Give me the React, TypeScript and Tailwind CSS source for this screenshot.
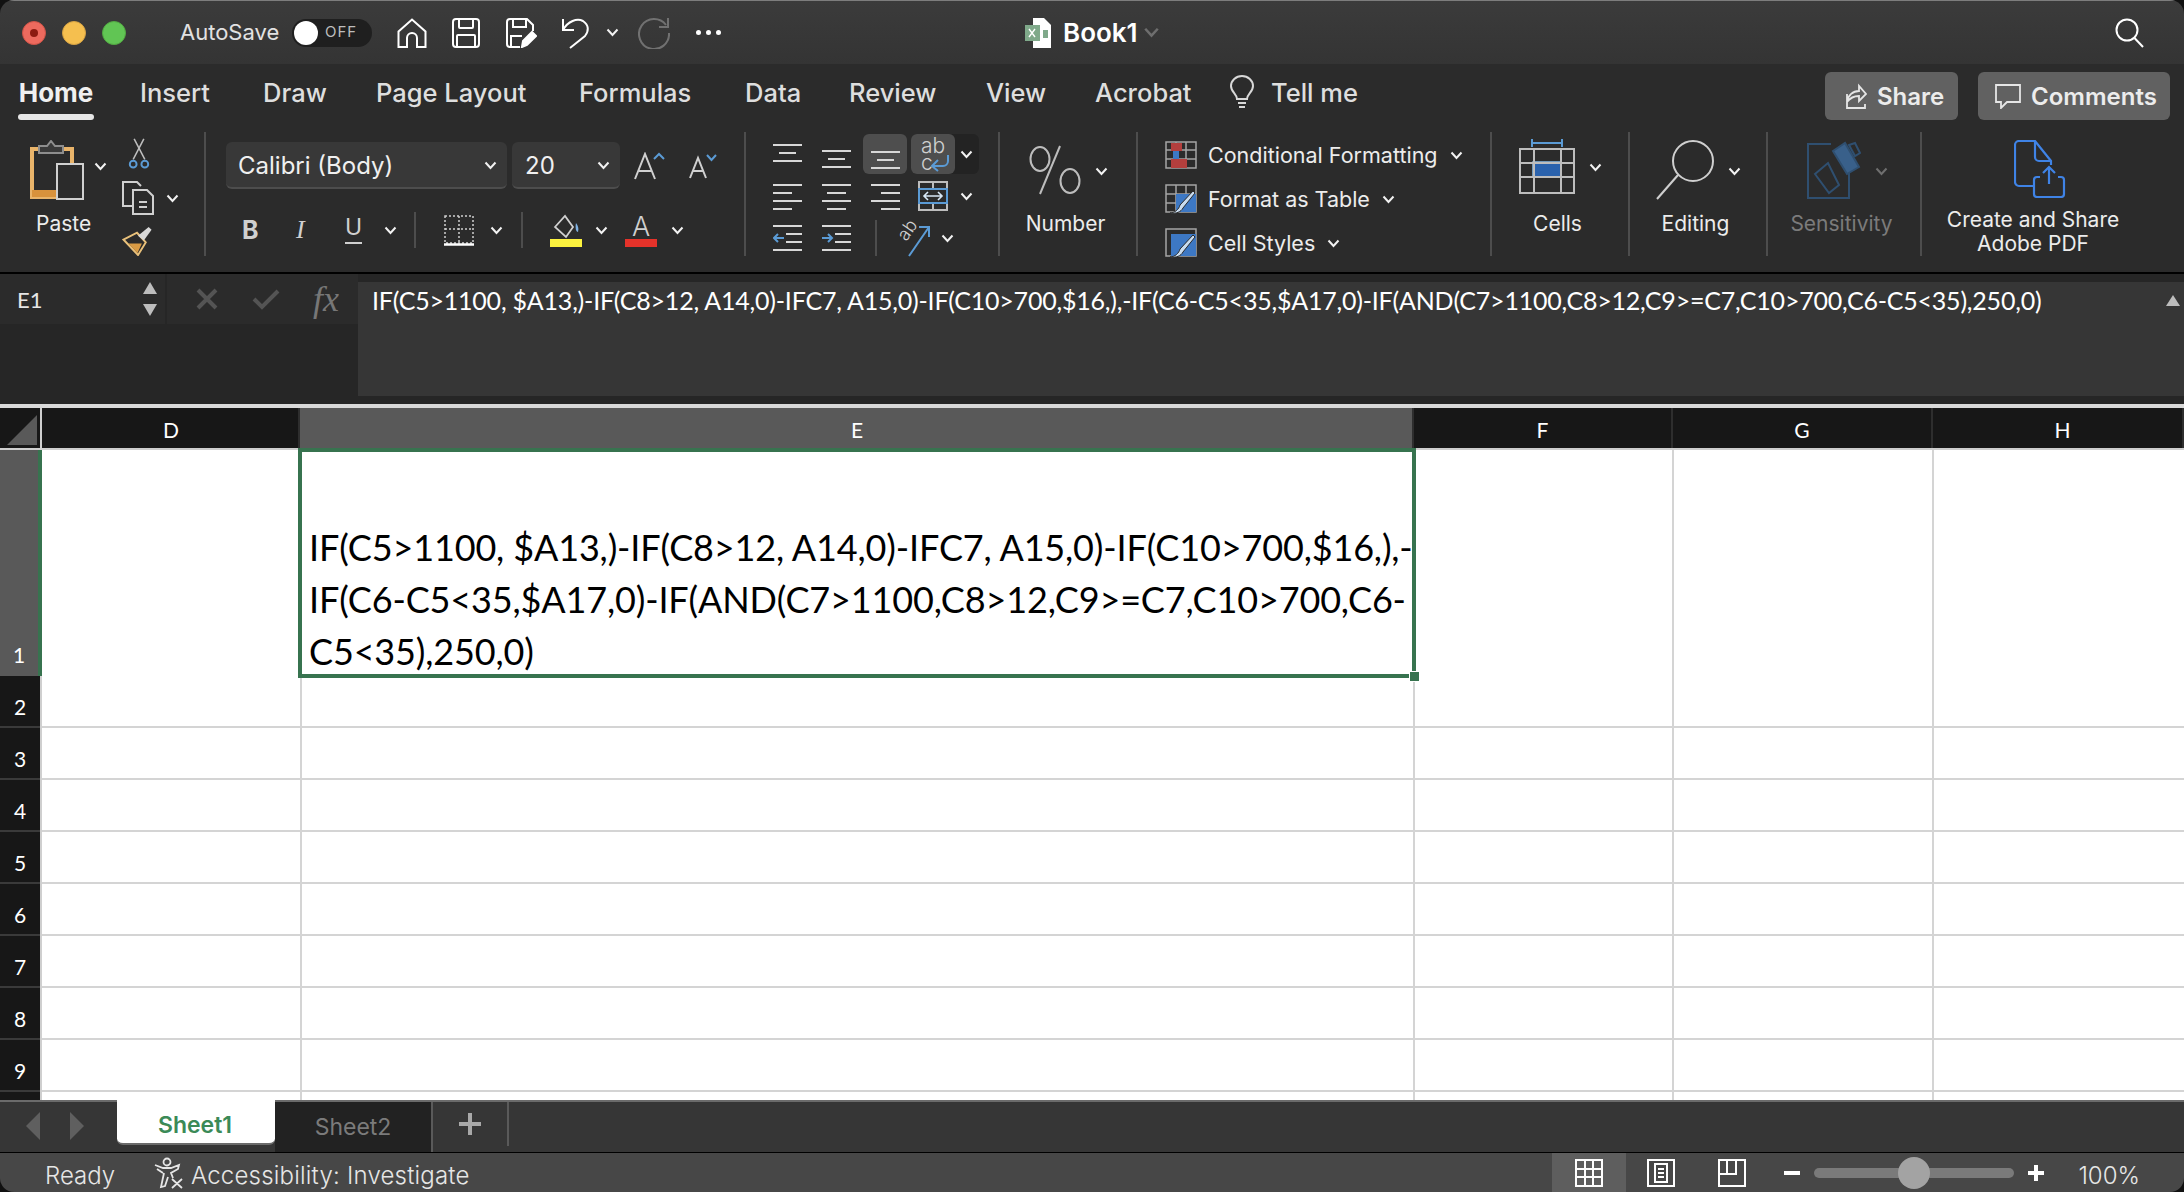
import type { ReactNode } from "react";

const SANS = "font-['Inter','Liberation_Sans',sans-serif]";
const CELL = "font-['Lato','Noto_Sans',sans-serif]";

const COLS = [
  { name: "D", w: "w-[258px] pl-[2px]" },
  { name: "E", w: "w-[1114px] pl-[2px]" },
  { name: "F", w: "w-[259px]" },
  { name: "G", w: "w-[260px]" },
  { name: "H", w: "flex-1 pl-[10px]" },
];
const ROWS = [2, 3, 4, 5, 6, 7, 8, 9];
const TABS = [
  { name: "Insert", w: "w-[74px] ml-[46px]" },
  { name: "Draw", w: "w-[63px] ml-[49px]" },
  { name: "Page Layout", w: "w-[152px] ml-[50px]" },
  { name: "Formulas", w: "w-[115px] ml-[51px]" },
  { name: "Data", w: "w-[57px] ml-[51px]" },
  { name: "Review", w: "w-[88px] ml-[47px]" },
  { name: "View", w: "w-[60px] ml-[49px]" },
  { name: "Acrobat", w: "w-[97px] ml-[49px]" },
];

function Chev({ className = "", color = "#f2f2f2" }: { className?: string; color?: string }) {
  return (
    <svg width="13" height="9" viewBox="0 0 13 9" className={`shrink-0 ${className}`}>
      <path d="M1.5 1.5 6.5 7l5-5.500" fill="none" stroke={color} strokeWidth="2" />
    </svg>
  );
}

function Lines({ rows, w = 29, color = "#d8d8d8" }: { rows: [number, number, number][]; w?: number; color?: string }) {
  return (
    <svg width={w} height="28" viewBox={`0 0 ${w} 28`} className="shrink-0">
      {rows.map(([x1, x2, y], i) => (
        <path key={i} d={`M${x1} ${y}H${x2}`} stroke={color} strokeWidth="2" />
      ))}
    </svg>
  );
}

function Sep({ className = "" }: { className?: string }) {
  return <div className={`w-[2px] bg-[#4d4d4d] shrink-0 ${className}`} />;
}

function BigTool({ label, icon, chev, wClass, dim, iconClass = "" }: { label: ReactNode; icon: ReactNode; chev?: boolean; wClass: string; dim?: boolean; iconClass?: string }) {
  return (
    <div className={`flex flex-col items-center h-full border-r-2 border-[#4d4d4d] shrink-0 ${wClass}`}>
      <div className={`h-[76px] flex items-center justify-center gap-[14px] ${iconClass}`}>
        {icon}
        {chev && <Chev color={dim ? "#6f6f6f" : "#f2f2f2"} className="mt-[2px]" />}
      </div>
      <div className={`text-[21px] leading-[28px] text-center pr-[5px] pt-[2px] ${dim ? "text-[#7b7b7b]" : "text-[#ececec]"}`}>{label}</div>
    </div>
  );
}

function StyleRow({ icon, label }: { icon: ReactNode; label: string }) {
  return (
    <div className="flex items-center h-[32px]">
      {icon}
      <span className="ml-[11px] text-[21.5px] text-[#ececec] whitespace-nowrap">{label}</span>
      <Chev className="ml-[12px]" />
    </div>
  );
}

function TitleBar() {
  return (
    <div className="h-16 shrink-0 flex items-center pl-[22px] border-t border-[#7d7d7d] bg-gradient-to-b from-[#3b3b3b] to-[#343434] text-white">
      <div className="w-6 h-6 rounded-full bg-[#ed6a5e] border border-[#ce5347] flex items-center justify-center">
        <div className="w-2 h-2 rounded-full bg-[#8c1a10]" />
      </div>
      <div className="w-6 h-6 rounded-full bg-[#f5bf4f] border border-[#d6a243] ml-4" />
      <div className="w-6 h-6 rounded-full bg-[#61c554] border border-[#52a842] ml-4" />
      <span className="ml-[54px] text-[22px] text-[#e2e2e2] w-[100px] whitespace-nowrap">AutoSave</span>
      <div className="ml-3 w-[80px] h-7 rounded-full bg-[#1f1f1f] flex items-center">
        <div className="w-6 h-6 ml-[2px] rounded-full bg-white" />
        <span className="ml-[7px] text-[15px] tracking-[1px] text-[#bdbdbd]">OFF</span>
      </div>
      <svg width="30" height="30" viewBox="0 0 30 30" className="ml-[25px]" fill="none" stroke="#fff" strokeWidth="2">
        <path d="M1.500 13.500 15 1.500l13.500 12V29H20V20a5 5 0 0 0-10 0v9H1.500Z" />
      </svg>
      <svg width="28" height="30" viewBox="0 0 28 30" className="ml-[25px]" fill="none" stroke="#fff" strokeWidth="2">
        <rect x="1" y="1" width="26" height="28" rx="3" />
        <path d="M7 1v8a1 1 0 0 0 1 1h12a1 1 0 0 0 1-1V1M5 29V18a1 1 0 0 1 1-1h16a1 1 0 0 1 1 1v11" />
      </svg>
      <svg width="31" height="30" viewBox="0 0 31 30" className="ml-[26px]" fill="none" stroke="#fff" strokeWidth="2">
        <path d="M14 29H4a3 3 0 0 1-3-3V4a3 3 0 0 1 3-3h17l6 6v6M7 1v8h13V1M5 29V18h11" />
        <path d="M16 29l1-6 9-9 4 4-9 9-5 2Z" fill="#fff" />
      </svg>
      <svg width="29" height="32" viewBox="0 0 29 32" className="ml-[24px]" fill="none" stroke="#fff" strokeWidth="2">
        <path d="M2 2v11h11M2 13C7 4 16 1 22 4c6 4 6 10 2 15L9 31" />
      </svg>
      <Chev className="ml-[16px]" />
      <svg width="32" height="32" viewBox="0 0 32 32" className="ml-[19px]" fill="none" stroke="#717171" strokeWidth="2">
        <path d="M28 8A15 15 0 1 0 31 16M30 1v9H21" />
      </svg>
      <div className="ml-[26px] flex gap-[5px]">
        <div className="w-[5px] h-[5px] rounded-full bg-white" />
        <div className="w-[5px] h-[5px] rounded-full bg-white" />
        <div className="w-[5px] h-[5px] rounded-full bg-white" />
      </div>
      <svg width="27" height="30" viewBox="0 0 27 30" className="ml-[304px]">
        <path d="M8 0h11l7 7v23H8Z" fill="#fff" />
        <rect x="0" y="7" width="15" height="16" fill="#7fa98a" />
        <path d="M4 11l6 8M10 11l-6 8" stroke="#fff" strokeWidth="1.400" />
        <path d="M18 12h5v8h-5Z" fill="#7fa98a" />
      </svg>
      <span className="ml-[11px] text-[26px] font-semibold text-white leading-none">Book1</span>
      <Chev className="ml-[7px] scale-125" color="#6e6e6e" />
      <svg width="30" height="30" viewBox="0 0 30 30" className="ml-auto mr-[39px]" fill="none" stroke="#fff" strokeWidth="2">
        <circle cx="12" cy="12" r="10.500" />
        <path d="M19.500 20 28 29" />
      </svg>
    </div>
  );
}

function TabRow() {
  return (
    <div className="h-[68px] flex text-[25.5px] text-[#dedede] shrink-0">
      <div className="ml-[18px] w-[76px] flex flex-col items-center">
        <span className="mt-[13px] h-[32px] leading-[32px] font-bold text-[#f0f0f0] text-[26px] whitespace-nowrap">Home</span>
        <div className="mt-[5px] h-[6px] w-full rounded-full bg-[#e6e6e6]" />
      </div>
      {TABS.map(t => (
        <span key={t.name} className={`mt-[13px] h-[32px] leading-[32px] font-medium whitespace-nowrap ${t.w}`}>{t.name}</span>
      ))}
      <svg width="26" height="34" viewBox="0 0 26 34" className="ml-[37px] mt-[11px]" fill="none" stroke="#d8d8d8" strokeWidth="2">
        <path d="M8 24c0-5-6-7-6-13a11 10 0 0 1 22 0c0 6-6 8-6 13ZM9 28h8M10 32h6" />
      </svg>
      <span className="ml-[16px] mt-[13px] h-[32px] leading-[32px] font-medium">Tell me</span>
      <div className="ml-auto mr-[14px] mt-[8px] flex gap-[20px] h-[48px]">
        <div className="w-[133px] rounded-md bg-[#616161] flex items-center pl-[16px] gap-[10px]">
          <svg width="26" height="26" viewBox="0 0 26 26" fill="none" stroke="#e6e6e6" strokeWidth="1.800">
            <path d="M6 11v14h18v-4M6 19c1-7 6-11 12-11V3l7 8-7 7v-5c-5 0-9 2-12 6Z" />
          </svg>
          <span className="font-semibold text-[24px] text-[#ececec] pt-[2px]">Share</span>
        </div>
        <div className="w-[192px] rounded-md bg-[#616161] flex items-center pl-[17px] gap-[10px]">
          <svg width="26" height="26" viewBox="0 0 26 26" fill="none" stroke="#e6e6e6" strokeWidth="1.800">
            <path d="M1 2h24v17H12l-6 6v-6H1Z" />
          </svg>
          <span className="font-semibold text-[24px] text-[#ececec] whitespace-nowrap pt-[2px]">Comments</span>
        </div>
      </div>
    </div>
  );
}

function ClipboardGroup() {
  return (
    <div className="w-[206px] h-full border-r-2 border-[#4d4d4d] flex pl-[30px] shrink-0">
      <div className="w-[70px] flex flex-col">
        <div className="h-[76px] flex items-center shrink-0">
          <svg width="54" height="60" viewBox="0 0 54 60" className="shrink-0">
            <path d="M2 9h40v48H2Z" fill="none" stroke="#e9b46a" strokeWidth="4" />
            <path d="M2 50h26v7H2Z" fill="#d8923c" />
            <path d="M9 13V6h8l4-5 4 5h8v7Z" fill="#3a3a3a" stroke="#8e8e8e" strokeWidth="2" />
            <rect x="27" y="24" width="26" height="35" fill="#2b2b2b" stroke="#d0d0d0" strokeWidth="2" />
          </svg>
          <Chev className="ml-[10px] mt-[-8px]" />
        </div>
        <span className="text-[21px] leading-[28px] text-[#ececec] ml-[6px] pt-[2px]">Paste</span>
      </div>
      <div className="ml-[22px] flex flex-col pt-[6px]">
        <svg width="22" height="32" viewBox="0 0 22 32" className="ml-[6px]" fill="none" strokeWidth="1.600">
          <path d="M5 22 16 1M17 22 6 1" stroke="#bdbdbd" />
          <circle cx="5" cy="27" r="3.500" stroke="#5b9bd5" strokeWidth="2" />
          <circle cx="17" cy="27" r="3.500" stroke="#5b9bd5" strokeWidth="2" />
        </svg>
        <div className="flex items-center mt-[12px]">
          <svg width="32" height="34" viewBox="0 0 32 34" fill="none" stroke="#d0d0d0" strokeWidth="2">
            <path d="M12 25H1V1h14l4 4" />
            <path d="M11 9h14l6 6v18H11Z" fill="#2b2b2b" />
            <path d="M17 21h8M17 26h8" />
          </svg>
          <Chev className="ml-[12px]" />
        </div>
        <svg width="32" height="32" viewBox="0 0 32 32" className="mt-[10px]">
          <path d="M1 15 15 8l9 10-8 13Z" fill="none" stroke="#e8c07a" strokeWidth="2" />
          <path d="M6 19 20 19 15.500 29Z" fill="#d99b44" />
          <path d="M16 11 27 2l3 3-8 11" fill="#d8d8d8" />
        </svg>
      </div>
    </div>
  );
}

function FontGroup() {
  return (
    <div className="w-[540px] h-full border-r-2 border-[#4d4d4d] pl-[20px] pt-[10px] shrink-0 flex flex-col">
      <div className="flex items-center h-[47px]">
        <div className="w-[281px] h-[47px] rounded-md bg-[#383838] border-b-2 border-[#4d4d4d] flex items-center pl-[12px] pr-[10px] pt-[2px] text-[24px] text-[#f0f0f0]">
          <span>Calibri (Body)</span>
          <Chev className="ml-auto" />
        </div>
        <div className="ml-[5px] w-[108px] h-[47px] rounded-md bg-[#383838] border-b-2 border-[#4d4d4d] flex items-center pl-[13px] pr-[10px] pt-[2px] text-[24px] text-[#f0f0f0]">
          <span>20</span>
          <Chev className="ml-auto" />
        </div>
        <svg width="31" height="28" viewBox="0 0 31 28" className="ml-[14px]" fill="none">
          <path d="M1 27 11 2l10 25M5 19h12" stroke="#d0d0d0" strokeWidth="2" />
          <path d="M20 7l5-5 5 5" stroke="#5b9bd5" strokeWidth="2" />
        </svg>
        <svg width="28" height="26" viewBox="0 0 28 26" className="ml-[24px]" fill="none">
          <path d="M1 25 9 5l8 20M4 18h10" stroke="#d0d0d0" strokeWidth="2" />
          <path d="M18 2l4.500 5 4.500-5" stroke="#5b9bd5" strokeWidth="2" />
        </svg>
      </div>
      <div className="flex items-center h-[36px] mt-[23px] ml-[16px] text-[#d0d0d0]">
        <span className="w-[16px] text-[25px] font-bold leading-none">B</span>
        <span className="ml-[38px] w-[12px] text-[26px] italic font-['Liberation_Serif',serif] leading-none">I</span>
        <div className="ml-[37px] w-[17px] flex flex-col items-center text-[23px] leading-none">
          <span>U</span>
          <div className="w-full h-[2px] bg-[#d0d0d0] mt-[3px]" />
        </div>
        <Chev className="ml-[22px]" />
        <Sep className="ml-[17px] h-[36px]" />
        <svg width="30" height="31" viewBox="0 0 30 31" className="ml-[28px]" fill="none" stroke="#cfcfcf">
          <path d="M1 1h28v27H1ZM15 1v27M1 14h28" strokeDasharray="2 2" strokeWidth="1.500" />
          <path d="M0 29.500h30" stroke="#fff" strokeWidth="2.500" />
        </svg>
        <Chev className="ml-[16px]" />
        <Sep className="ml-[18px] h-[36px]" />
        <div className="ml-[27px] w-[32px] flex flex-col items-center">
          <svg width="28" height="25" viewBox="0 0 28 25" fill="none">
            <path d="M3 13 13 2l8 11-7 10Z" stroke="#d0d0d0" strokeWidth="1.800" />
            <path d="M24 9c2 3 3 5 2 9-2 0-3-4-2-9Z" fill="#7fb1e3" />
          </svg>
          <div className="w-full h-[8px] bg-[#fdf33f]" />
        </div>
        <Chev className="ml-[13px]" />
        <div className="ml-[17px] w-[32px] flex flex-col items-center">
          <span className="text-[27px] leading-[25px] text-[#d0d0d0] font-light">A</span>
          <div className="w-full h-[8px] bg-[#e5322a]" />
        </div>
        <Chev className="ml-[14px]" />
      </div>
    </div>
  );
}

function Indent({ right }: { right?: boolean }) {
  return (
    <svg width="29" height="28" viewBox="0 0 29 28" className="shrink-0" fill="none">
      <path d="M0 2h29M13 10h16M13 18h16M0 26h29" stroke="#d8d8d8" strokeWidth="2" />
      <path d={right ? "M0 14h10M6 10l4 4-4 4" : "M11 14H1M5 10l-4 4 4 4"} stroke="#5b9bd5" strokeWidth="2" />
    </svg>
  );
}

function AlignGroup() {
  return (
    <div className="w-[254px] h-full border-r-2 border-[#4d4d4d] pl-[27px] shrink-0 flex flex-col">
      <div className="flex items-center h-[40px] mt-[2px]">
        <Lines rows={[[0, 29, 5], [6, 23, 13], [0, 29, 21]]} />
        <div className="ml-[20px]"><Lines rows={[[0, 29, 11], [6, 23, 19], [0, 29, 27]]} /></div>
        <div className="ml-[12px] w-[44px] h-[40px] rounded-md bg-[#4e4e4e] flex items-end justify-center pb-[3px]">
          <Lines rows={[[0, 29, 9], [6, 23, 17], [0, 29, 25]]} />
        </div>
        <div className="ml-[4px] w-[68px] h-[40px] rounded-md bg-[#232323] flex items-center">
          <div className="w-[44px] h-[40px] rounded-md bg-[#4e4e4e] relative text-[21px] leading-[17px] text-[#d0d0d0] pl-[10px] pt-[3px] font-light">
            ab<br />c
            <svg width="18" height="18" viewBox="0 0 18 18" className="absolute left-[20px] top-[20px]" fill="none" stroke="#5b9bd5" strokeWidth="2">
              <path d="M17 1v6a5 5 0 0 1-5 5H2M7 6 1 12l6 5" />
            </svg>
          </div>
          <Chev className="ml-[5px]" />
        </div>
      </div>
      <div className="flex items-center h-[32px] mt-[7px]">
        <Lines rows={[[0, 29, 3], [0, 19, 11], [0, 29, 19], [0, 19, 27]]} />
        <div className="ml-[20px]"><Lines rows={[[0, 29, 3], [5, 24, 11], [0, 29, 19], [5, 24, 27]]} /></div>
        <div className="ml-[20px]"><Lines rows={[[0, 29, 3], [10, 29, 11], [0, 29, 19], [10, 29, 27]]} /></div>
        <svg width="30" height="30" viewBox="0 0 30 30" className="ml-[18px]" fill="none">
          <path d="M1 1h28v28H1ZM15 1v7M15 22v7" stroke="#bdbdbd" strokeWidth="2" />
          <path d="M1 8h28v14H1Z" stroke="#5b9bd5" strokeWidth="2" />
          <path d="M6 15h18M10 11l-4 4 4 4M20 11l4 4-4 4" stroke="#d8e8f6" strokeWidth="1.600" />
        </svg>
        <Chev className="ml-[12px]" />
      </div>
      <div className="flex items-center h-[36px] mt-[9px]">
        <Indent />
        <div className="ml-[20px]"><Indent right /></div>
        <Sep className="ml-[24px] h-[36px]" />
        <div className="ml-[20px] relative w-[34px] h-[38px] shrink-0">
          <svg width="34" height="38" viewBox="0 0 34 38" fill="none">
            <path d="M12 37 32 8M22 8h10v10" stroke="#5b9bd5" strokeWidth="2" />
          </svg>
          <span className="absolute left-[0px] top-[2px] text-[18px] leading-[18px] text-[#cfcfcf] font-light -rotate-[55deg]">ab</span>
        </div>
        <Chev className="ml-[10px]" />
      </div>
    </div>
  );
}

function StylesGroup() {
  return (
    <div className="w-[354px] h-full border-r-2 border-[#4d4d4d] pl-[27px] pt-[7px] shrink-0 flex flex-col gap-[12px]">
      <StyleRow
        label="Conditional Formatting"
        icon={
          <svg width="32" height="28" viewBox="0 0 32 28">
            <path d="M1 1h30v26H1ZM11 1v26M21 1v26M1 9h30M1 18h30" fill="none" stroke="#a5a5a5" strokeWidth="1.500" />
            <rect x="6" y="2" width="11" height="8" fill="#b33f3d" />
            <rect x="8" y="10" width="6" height="8" fill="#3d78c4" />
            <rect x="6" y="18" width="16" height="9" fill="#b33f3d" />
          </svg>
        }
      />
      <StyleRow
        label="Format as Table"
        icon={
          <svg width="32" height="30" viewBox="0 0 32 30">
            <path d="M1 1h30v27H1ZM11 1v27M21 1v27M1 10h30M1 19h30" fill="none" stroke="#a5a5a5" strokeWidth="1.500" />
            <path d="M11 10h20v18H11Z" fill="#3d78c4" />
            <path d="M5 29c5 0 9-4 10-8l13-14 2 2-12 15c-2 4-7 6-13 5Z" fill="#c9dcef" stroke="#2b2b2b" />
          </svg>
        }
      />
      <StyleRow
        label="Cell Styles"
        icon={
          <svg width="32" height="30" viewBox="0 0 32 30">
            <path d="M1 1h30v27H1Z" fill="none" stroke="#a5a5a5" strokeWidth="1.500" />
            <path d="M6 6h25v22H6Z" fill="#3d78c4" />
            <path d="M5 29c5 0 9-4 10-8l13-14 2 2-12 15c-2 4-7 6-13 5Z" fill="#c9dcef" stroke="#2b2b2b" />
          </svg>
        }
      />
    </div>
  );
}

function Ribbon() {
  return (
    <div className="h-[208px] shrink-0 bg-[#2b2b2b] flex flex-col">
      <TabRow />
      <div className="h-[124px] flex text-white">
        <ClipboardGroup />
        <FontGroup />
        <AlignGroup />
        <BigTool
          wClass="w-[138px]"
          label="Number"
          chev
          icon={
            <svg width="52" height="50" viewBox="0 0 52 50" fill="none" stroke="#bdbdbd" strokeWidth="2">
              <path d="M11 49 31 1" />
              <ellipse cx="11" cy="14" rx="9.500" ry="12" />
              <ellipse cx="41" cy="36" rx="9.500" ry="12" />
            </svg>
          }
        />
        <StylesGroup />
        <BigTool
          wClass="w-[138px]"
          label="Cells"
          chev
          iconClass="pb-[8px]"
          icon={
            <svg width="56" height="56" viewBox="0 0 56 56" fill="none">
              <path d="M13 5h30M13 1v8M43 1v8" stroke="#5b9bd5" strokeWidth="2" />
              <rect x="14" y="24" width="28" height="15" fill="#2a62ad" stroke="#8cc0ea" strokeWidth="1.500" />
              <path d="M1 11h54v44H1ZM15 11v44M42 11v44M1 25h54M1 39h54" stroke="#bdbdbd" strokeWidth="2" />
            </svg>
          }
        />
        <BigTool
          wClass="w-[138px]"
          label="Editing"
          chev
          icon={
            <svg width="58" height="60" viewBox="0 0 58 60" fill="none" stroke="#cfcfcf" strokeWidth="2">
              <ellipse cx="37" cy="21" rx="20" ry="20" />
              <path d="M22 35 1 59" />
            </svg>
          }
        />
        <BigTool
          wClass="w-[154px]"
          label="Sensitivity"
          chev
          dim
          iconClass="pl-[6px]"
          icon={
            <svg width="54" height="58" viewBox="0 0 54 58" fill="none" stroke="#2f4f70" strokeWidth="2">
              <path d="M24 3H1v54h41V32" />
              <path d="M8 33 21 22 32 44 22 52Z" />
              <path d="M26 10 38 2 52 26 40 33Z" fill="#39608a" />
              <path d="M42 4l6-2 5 10-5 3Z" />
            </svg>
          }
        />
        <div className="w-[222px] flex flex-col items-center">
          <div className="h-[76px] flex items-center pl-[14px]">
            <svg width="52" height="58" viewBox="0 0 52 58" fill="none" stroke="#3f83e6" strokeWidth="2.200">
              <path d="M19 46H5a4 4 0 0 1-4-4V5a4 4 0 0 1 4-4h16l16 20v4" />
              <path d="M21 1v16a4 4 0 0 0 4 4h12" />
              <path d="M26 37h-3a3 3 0 0 0-3 3v14a3 3 0 0 0 3 3h24a3 3 0 0 0 3-3V40a3 3 0 0 0-3-3h-3M35 44V27M29 33l6-6 6 6" />
            </svg>
          </div>
          <div className="text-[21px] leading-[24px] text-center text-[#ececec] whitespace-nowrap pt-[2px]">
            Create and Share<br />Adobe PDF
          </div>
        </div>
      </div>
    </div>
  );
}

function FormulaBar() {
  return (
    <div className="h-[132px] shrink-0 bg-[#262626] border-t-2 border-black flex relative">
      <div className="w-[358px] shrink-0 flex flex-col">
        <div className="h-[52px] flex">
          <div className="w-[165px] h-[50px] bg-[#2b2b2b] flex items-center pl-[17px] text-[22px] text-[#e6e6e6] font-['Lato',sans-serif]">
            E1
            <div className="ml-auto mr-[8px] flex flex-col gap-[10px]">
              <div className="w-0 h-0 border-x-[7px] border-x-transparent border-b-[12px] border-b-[#bdbdbd]" />
              <div className="w-0 h-0 border-x-[7px] border-x-transparent border-t-[12px] border-t-[#bdbdbd]" />
            </div>
          </div>
          <div className="ml-[2px] flex-1 h-[50px] bg-[#2b2b2b] flex items-center pl-[29px]">
            <svg width="22" height="22" viewBox="0 0 22 22" stroke="#545454" strokeWidth="4"><path d="M2 2l18 18M20 2 2 20" /></svg>
            <svg width="28" height="22" viewBox="0 0 28 22" className="ml-[34px]" fill="none" stroke="#545454" strokeWidth="4"><path d="M2 11l8 8L26 3" /></svg>
            <span className="ml-[33px] text-[36px] italic text-[#777] font-['Liberation_Serif',serif] leading-none">fx</span>
          </div>
        </div>
      </div>
      <div className="flex-1 h-[114px] mt-[8px] bg-[#363636] text-white text-[25px] leading-[36px] pl-[14px] font-['Lato',sans-serif] tracking-[-0.21px] whitespace-nowrap">
        IF(C5&gt;1100, $A13,)-IF(C8&gt;12, A14,0)-IFC7, A15,0)-IF(C10&gt;700,$16,),-IF(C6-C5&lt;35,$A17,0)-IF(AND(C7&gt;1100,C8&gt;12,C9&gt;=C7,C10&gt;700,C6-C5&lt;35),250,0)
      </div>
      <div className="absolute right-[4px] top-[21px] w-0 h-0 border-x-[7px] border-x-transparent border-b-[11px] border-b-[#bdbdbd]" />
    </div>
  );
}

function Sheet() {
  return (
    <div className={`flex-1 min-h-0 bg-white overflow-hidden border-t-[4px] border-[#d9d9d9] ${CELL}`}>
      <div className="h-[42px] flex bg-[#171717] text-white text-[21px] border-b-2 border-[#cfcfcf]">
        <div className="w-[42px] border-r-2 border-[#cfcfcf] flex items-end justify-end pr-[3px] pb-[3px]">
          <div className="w-0 h-0 border-l-[30px] border-l-transparent border-b-[30px] border-b-[#595959]" />
        </div>
        {COLS.map(c => (
          <div key={c.name} className={`${c.w} flex items-center justify-center border-r-2 border-[#2e2e2e] pt-[3px] ${c.name === "E" ? "bg-[#595959]" : ""}`}>
            {c.name}
          </div>
        ))}
      </div>
      <div className="flex h-[226px] relative">
        <div className="w-[42px] bg-[#595959] border-r-4 border-[#37734f] text-white text-[21px] flex items-end justify-center pb-[6px]">1</div>
        <div className="w-[260px] border-r-2 border-[#d4d4d4]" />
        <div className="w-[1113px] relative flex items-end pl-[7px] text-black text-[36px] leading-[52px] tracking-[-0.15px] whitespace-nowrap">
          <div className="relative top-[1px]">
            IF(C5&gt;1100, $A13,)-IF(C8&gt;12, A14,0)-IFC7, A15,0)-IF(C10&gt;700,$16,),-<br />
            IF(C6-C5&lt;35,$A17,0)-IF(AND(C7&gt;1100,C8&gt;12,C9&gt;=C7,C10&gt;700,C6-<br />
            C5&lt;35),250,0)
          </div>
          <div className="absolute -left-[4px] -top-[2px] -right-[1px] -bottom-[2px] border-[4px] border-[#37734f]" />
          <div className="absolute -right-[5px] -bottom-[6px] w-[11px] h-[11px] bg-[#37734f] border border-white" />
        </div>
        <div className="w-[259px] border-r-2 border-[#d4d4d4]" />
        <div className="w-[260px] border-r-2 border-[#d4d4d4]" />
      </div>
      {ROWS.map(r => (
        <div key={r} className="flex h-[52px]">
          <div className="w-[40px] bg-[#171717] text-white text-[21px] flex items-end justify-center pb-[4px] border-b-2 border-[#3a3a3a]">{r}</div>
          <div className="w-[2px] bg-[#cfcfcf]" />
          <div className="flex-1 flex border-b-2 border-[#d4d4d4]">
            <div className="w-[260px] border-r-2 border-[#d4d4d4]" />
            <div className="w-[1113px] border-r-2 border-[#d4d4d4]" />
            <div className="w-[259px] border-r-2 border-[#d4d4d4]" />
            <div className="w-[260px] border-r-2 border-[#d4d4d4]" />
          </div>
        </div>
      ))}
      <div className="flex h-[20px]">
        <div className="w-[40px] bg-[#171717]" />
        <div className="w-[2px] bg-[#cfcfcf]" />
        <div className="w-[260px] border-r-2 border-[#d4d4d4]" />
        <div className="w-[1113px] border-r-2 border-[#d4d4d4]" />
        <div className="w-[259px] border-r-2 border-[#d4d4d4]" />
        <div className="w-[260px] border-r-2 border-[#d4d4d4]" />
      </div>
    </div>
  );
}

function SheetTabs() {
  return (
    <div className="h-[53px] shrink-0 bg-[#363636] border-t-2 border-[#6b6b6b] border-b border-b-black flex text-[23px]">
      <div className="w-[117px] flex items-center pl-[26px] gap-[30px] pb-[2px]">
        <div className="w-0 h-0 border-y-[14px] border-y-transparent border-r-[14px] border-r-[#5f5f5f]" />
        <div className="w-0 h-0 border-y-[14px] border-y-transparent border-l-[14px] border-l-[#5f5f5f]" />
      </div>
      <div className="w-[158px] h-[45px] -mt-[2px] bg-white rounded-b-md border-b-2 border-[#6b6b6b] flex items-center justify-center pt-[7px] pr-[2px] font-semibold text-[#3b8a57]">Sheet1</div>
      <div className="w-[158px] bg-[#222222] flex items-center justify-center text-[#7b7b7b] border-r-2 border-[#5a5a5a]">Sheet2</div>
      <div className="w-[76px] h-[44px] border-r-2 border-[#5a5a5a] flex items-center justify-center">
        <svg width="22" height="22" viewBox="0 0 22 22" stroke="#a8a8a8" strokeWidth="4"><path d="M11 0v22M0 11h22" /></svg>
      </div>
    </div>
  );
}

function StatusBar() {
  return (
    <div className="h-[39px] shrink-0 bg-[#474747] flex items-center pl-[45px] text-[24px] text-[#e6e6e6] font-light">
      <span className="w-[68px] pt-[6px]">Ready</span>
      <svg width="32" height="32" viewBox="0 0 32 32" className="ml-[40px]" fill="none" stroke="#e6e6e6" strokeWidth="1.800">
        <circle cx="14" cy="5" r="3.500" />
        <path d="M2 8l8 3h8l8-3-1 4-7 4 2 5M11 16l-3 14 4-1 3-9M19 22l10 9M29 22l-10 9M4 12l6 4" />
      </svg>
      <span className="ml-[6px] pt-[6px] whitespace-nowrap tracking-[0.2px]">Accessibility: Investigate</span>
      <div className="ml-auto w-[74px] h-full bg-[#5e5e5e] flex items-center justify-center">
        <svg width="28" height="28" viewBox="0 0 28 28" fill="none" stroke="#fff" strokeWidth="2">
          <path d="M1 1h26v26H1ZM10 1v26M18 1v26M1 10h26M1 18h26" />
        </svg>
      </div>
      <svg width="28" height="28" viewBox="0 0 28 28" className="ml-[21px]" fill="none" stroke="#fff" strokeWidth="2">
        <path d="M1 1h26v26H1ZM8 5h12v18H8ZM11 10h6M11 14h6M11 18h6" />
      </svg>
      <svg width="28" height="28" viewBox="0 0 28 28" className="ml-[43px]" fill="none" stroke="#fff" strokeWidth="2">
        <path d="M1 1h26v26H1ZM1 15h17V1M9 1v14" />
      </svg>
      <div className="ml-[38px] w-[16px] h-[4px] bg-white" />
      <div className="ml-[14px] w-[200px] h-[10px] rounded-full bg-[#7a7a7a] relative">
        <div className="absolute left-[84px] -top-[11px] w-[32px] h-[32px] rounded-full bg-[#a3a3a3]" />
      </div>
      <svg width="16" height="16" viewBox="0 0 16 16" className="ml-[14px]" stroke="#fff" strokeWidth="4"><path d="M8 0v16M0 8h16" /></svg>
      <span className="ml-[34px] mr-[44px] pt-[6px]">100%</span>
    </div>
  );
}

export default function App() {
  return (
    <div className="w-[2184px] h-[1192px] bg-[#111] overflow-hidden">
      <div className={`w-full h-full rounded-[14px] overflow-hidden flex flex-col ${SANS}`}>
        <TitleBar />
        <Ribbon />
        <FormulaBar />
        <Sheet />
        <SheetTabs />
        <StatusBar />
      </div>
    </div>
  );
}
